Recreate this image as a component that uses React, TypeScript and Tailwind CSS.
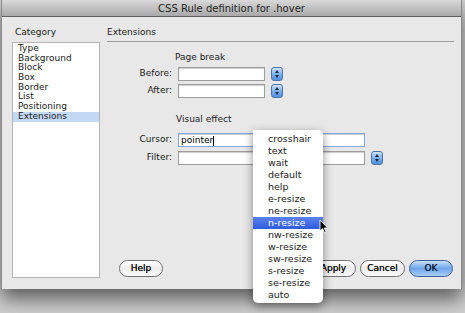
const font = "font-['Lucida_Grande','DejaVu_Sans',sans-serif]";

const categories = ["Type", "Background", "Block", "Box", "Border", "List", "Positioning", "Extensions"];
const cursors = [
  "crosshair", "text", "wait", "default", "help", "e-resize", "ne-resize",
  "n-resize", "nw-resize", "w-resize", "sw-resize", "s-resize", "se-resize", "auto",
];

const Stepper = () => (
  <div className="w-[12px] h-[14px] rounded-[3px] border border-[#4f74a8] bg-gradient-to-b from-[#cfe2fa] via-[#7fb0ec] to-[#4f8fdc] flex items-center justify-center">
    <svg width="6" height="10" viewBox="0 0 6 10">
      <path d="M3 1 L5 4 L1 4 Z" fill="#1b2a44" />
      <path d="M3 9 L5 6 L1 6 Z" fill="#1b2a44" />
    </svg>
  </div>
);

const Field = ({ w, focus, children }: { w: string; focus?: boolean; children?: React.ReactNode }) => (
  <div
    className={`${w} h-[14px] bg-white border ${focus ? "border-[#7fa8e0] shadow-[0_0_0_2px_rgba(110,160,230,0.55)]" : "border-[#9c9c9c]"} shadow-[inset_0_1px_1px_rgba(0,0,0,0.2)] text-[9px] leading-[12px] pl-[2px] text-black`}
  >
    {children}
  </div>
);

const Pill = ({ label, w, primary }: { label: string; w: string; primary?: boolean }) => (
  <div
    className={`${w} h-[17px] rounded-full border text-[9px] flex items-center justify-center [text-shadow:0_0_0.4px_currentColor] ${
      primary
        ? "border-[#3d5f98] bg-gradient-to-b from-[#c9def8] via-[#6da6ec] to-[#a8cdf5] text-[#0d1d36]"
        : "border-[#6f6f6f] bg-gradient-to-b from-white via-[#ececec] to-[#fafafa] text-[#111]"
    }`}
  >
    {label}
  </div>
);

export default function App() {
  return (
    <div className={`${font} w-[465px] h-[313px] bg-[#cfcfcf] relative overflow-hidden text-[#1a1a1a]`}>
      <div className="ml-[1px] w-[461px] h-[289px] bg-[#e8e8e8] border-x border-[#8a8a8a] shadow-[0_10px_18px_rgba(0,0,0,0.55)] flex flex-col">
        {/* title bar */}
        <div className="h-[17px] bg-gradient-to-b from-[#d9d9d9] to-[#a9a9a9] border-b border-[#5e5e5e] flex items-center justify-center text-[10px] text-[#1e1e1e]">
          CSS Rule definition for .hover
        </div>

        <div className="flex flex-1">
          {/* category column */}
          <div className="pl-[10px] pt-[9px] w-[105px]">
            <div className="text-[9px] leading-[12px] pl-[3px]">Category</div>
            <div className="mt-[4px] w-[88px] h-[236px] bg-white border border-[#b4b4b4] pt-[1px]">
              {categories.map((c) => (
                <div
                  key={c}
                  className={`text-[9px] leading-[9.7px] h-[9.7px] pl-[5px] ${c === "Extensions" ? "bg-[#c3d9f5]" : ""}`}
                >
                  {c}
                </div>
              ))}
            </div>
          </div>

          {/* extensions panel */}
          <div className="w-[347px] pt-[9px] flex flex-col">
            <div className="text-[9px] leading-[12px] pb-[3px] border-b border-[#9a9a9a]">Extensions</div>

            <div className="pl-[68px] mt-[9px] text-[9px] leading-[12px]">Page break</div>
            <div className="mt-[4px] grid grid-cols-[65px_87px_12px] gap-x-[6px] gap-y-[3px] items-center text-[9px]">
              <div className="text-right">Before:</div>
              <Field w="w-[87px]" />
              <Stepper />
              <div className="text-right">After:</div>
              <Field w="w-[87px]" />
              <Stepper />
            </div>

            <div className="pl-[69px] mt-[15px] text-[9px] leading-[12px]">Visual effect</div>
            <div className="mt-[8px] grid grid-cols-[65px_187px_12px] gap-x-[6px] gap-y-[4px] items-center text-[9px]">
              <div className="text-right">Cursor:</div>
              <Field w="w-[187px]" focus>
                pointer<span className="inline-block w-px h-[10px] bg-black align-middle" />
              </Field>
              <div />
              <div className="text-right">Filter:</div>
              <Field w="w-[187px]" />
              <Stepper />
            </div>

            <div className="mt-auto mb-[12px] flex items-center pl-[12px] pr-[1px]">
              <Pill label="Help" w="w-[44px]" />
              <div className="flex-1" />
              <div className="flex gap-[4px]">
                <Pill label="Apply" w="w-[45px]" />
                <Pill label="Cancel" w="w-[45px]" />
                <Pill label="OK" w="w-[44px]" primary />
              </div>
            </div>
          </div>
        </div>
      </div>

      {/* popup menu */}
      <div className="absolute left-[253px] top-[130px] w-[70px] bg-white rounded-b-[5px] rounded-tr-[5px] shadow-[0_3px_10px_rgba(0,0,0,0.45)] pt-[3px] pb-[2px]">
        {cursors.map((c) => (
          <div
            key={c}
            className={`h-[12px] leading-[12px] text-[9.5px] pl-[15px] ${
              c === "n-resize" ? "bg-gradient-to-b from-[#5a82ee] to-[#2f5be0] text-white" : "text-[#1a1a1a]"
            }`}
          >
            {c}
          </div>
        ))}
      </div>

      {/* mouse pointer */}
      <svg className="absolute left-[319px] top-[219px]" width="10" height="15" viewBox="0 0 10 15">
        <path d="M1 1 L1 12 L3.6 9.6 L5.6 14 L7.2 13.3 L5.3 9 L8.8 9 Z" fill="#000" stroke="#fff" strokeWidth="0.9" />
      </svg>
    </div>
  );
}
